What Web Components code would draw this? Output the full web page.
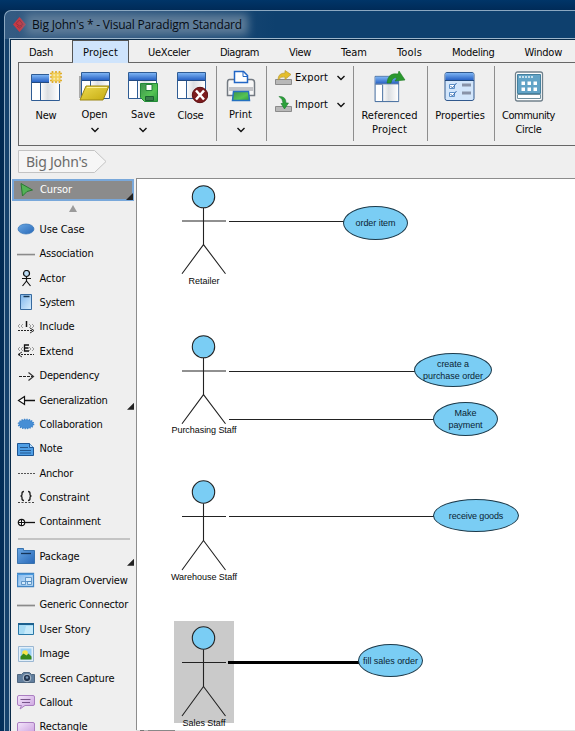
<!DOCTYPE html>
<html lang="en">
<head>
<meta charset="utf-8">
<title>Big John's * - Visual Paradigm Standard</title>
<style>
html,body{margin:0;height:100%;overflow:hidden}
body{font-family:"DejaVu Sans Condensed","DejaVu Sans",sans-serif;font-stretch:condensed;font-size:11px;color:#080808}
</style>
</head>
<body>
<app-window></app-window>
<script>
class FitText extends HTMLElement{
  connectedCallback(){
    const root=this.attachShadow({mode:'open'});
    const w=+this.getAttribute('w');
    root.innerHTML=`<style>:host{display:block;width:${w}px;white-space:nowrap;line-height:14px;flex:none}span{display:inline-block}</style><span><slot></slot></span>`;
    const s=root.querySelector('span'),n=this.textContent.length;
    const r=s.getBoundingClientRect().width;
    if(r)s.style.letterSpacing=((w-r)/n).toFixed(3)+'px';
  }
}

const defs=`<defs>
<linearGradient id="bar" x2="0" y2="1"><stop stop-color="#7db4f4"/><stop offset="1" stop-color="#2862c4"/></linearGradient>
<linearGradient id="pane" x2="1" y2="0"><stop stop-color="#fff"/><stop offset=".4" stop-color="#dcdfe2"/><stop offset="1" stop-color="#fff"/></linearGradient>
<linearGradient id="yel" x2="1" y2="1"><stop stop-color="#eedb50"/><stop offset="1" stop-color="#c5ab10"/></linearGradient>
<linearGradient id="grn" x2="1" y2="1"><stop stop-color="#3e8f4e"/><stop offset=".6" stop-color="#55c453"/><stop offset="1" stop-color="#2f9a3f"/></linearGradient>
<linearGradient id="blu" x2="1" y2="1"><stop stop-color="#69a7e3"/><stop offset="1" stop-color="#2868b8"/></linearGradient>
<linearGradient id="sky" x2="1" y2="1"><stop stop-color="#7fb6ec"/><stop offset="1" stop-color="#d8eefe"/></linearGradient>
<linearGradient id="pur" x2="1" y2="1"><stop stop-color="#f4e6fb"/><stop offset="1" stop-color="#c99ede"/></linearGradient></defs>`;
const win=`<path d="M2.5 4.5h28v26h-28z" fill="#fff" stroke="#2f5c94"/><path d="M3 5h27v7h-27z" fill="url(#bar)"/><path d="M3 12.5h27" stroke="#244b80"/><path d="M11 13h19v17h-19z" fill="url(#pane)"/><path d="M11.5 13v17" stroke="#2f5c94"/>`;
const big={
new:win+`<path d="M20 0h14v14h-14z" fill="#efefef"/><path d="M23.5 1v12M27 1v12M30.500 1v12M21 3.500h12M21 7h12M21 10.500h12" stroke="#e0ae2c" stroke-width="1.700"/><path d="M23 3h8v8h-8z" fill="#ffe87a" opacity=".55"/>`,
open:`<path d="M1 6h3v22H1z" fill="#aaa"/><g transform="translate(1,-2)">${win}</g><path d="M8 16h23l-6 14H2z" fill="url(#yel)" stroke="#9b8613"/><path d="M9 17.500h20" stroke="#fff39a"/>`,
save:`<g transform="translate(0,-2)">${win}</g><path d="M14.500 13.500h17v18h-13l-4-4z" fill="url(#grn)" stroke="#238a38"/><path d="M20 14.500h6v6h-6z" fill="#fff" stroke="#26803a"/><path d="M19.500 26.500h8v4h-8z" fill="#3b7d4c" stroke="#1b6330"/>`,
close:`<g transform="translate(1,-2)">${win}</g><circle cx="26" cy="25" r="7.700" fill="#7d1c1e" stroke="#5d1113"/><path d="M22 20.500l8 9M30 20.500l-8 9" stroke="#fff" stroke-width="2.500"/>`,
print:`<path d="M5.500 9.500h22q3 0 3 3v13h-27v-13q0-3 2-3z" fill="#f7f7f7" stroke="#737a82" stroke-width="1.500"/><path d="M5 17h24v4H5z" fill="#c2c3c7"/><path d="M10.500 1.500h9l4 4v7h-13z" fill="#fff" stroke="#2266c5" stroke-width="1.500"/><path d="M19 1.500v5h5" fill="none" stroke="#2266c5"/><path d="M9.500 21.500h15l1 9h-17z" fill="url(#grn)" stroke="#2471c0" stroke-width="1.500"/>`,
ref:`<g transform="translate(0,2) scale(.84 .97)">${win}</g><path d="M14 13q1-11 11-9l1-3 6 9-10 1 2-3q-5-1-6 5z" fill="#2b982e" stroke="#1f7c23" stroke-width=".6"/>`,
prop:`<rect x="2" y="2.500" width="29" height="28" rx="2" fill="#d3e6fb" stroke="#31598d"/><path d="M2.500 3h28v7h-28z" fill="url(#bar)"/><path d="M2 10.500h29" stroke="#244b80"/><path d="M6.500 14.500h5v4h-5zM6.500 22.500h5v4h-5z" fill="#fff" stroke="#5a8fc8"/><path d="M7.500 16l2 2 4-5M7.500 24l2 2 4-5" fill="none" stroke="#3e6fb0"/><path d="M19 13.500h9v3h-9zM19 21.500h9v3h-9z" fill="#8993a8"/>`,
comm:`<rect x="3.500" y="2" width="27" height="29" rx="2" fill="#fff" stroke="#71818c" stroke-width="1.300"/><path d="M5.500 4.500h23v19h-23z" fill="#62a3c6" stroke="#45819f"/><path d="M7 7h15" stroke="#c4dfec" stroke-width="2.200" stroke-dasharray="2 1"/><path d="M9.500 11.500h3.500v3.500H9.500zM15.500 11.500h3.500v3.500h-3.500zM21.500 11.500h3.500v3.500h-3.500zM9.500 17.500h3.500v3.500H9.500zM15.500 17.500h3.500v3.500h-3.500zM21.500 17.500h3.500v3.500h-3.500z" fill="#fff"/><path d="M5.500 24.500h23v4h-23z" fill="#fff" stroke="#71919f"/>`
};
const small={
cursor:`<path d="M3 1.500L14.500 8 9 9.500 4.500 14z" fill="#53b256" stroke="#2b7933"/>`,
usecase:`<ellipse cx="9" cy="8" rx="8" ry="5" fill="url(#blu)" stroke="#3674b6" stroke-width=".7"/>`,
assoc:`<path d="M0 8.500h18" stroke="#8b8b8b" stroke-width="1.700"/>`,
actor:`<circle cx="9.500" cy="3.500" r="3" fill="#bcdcf4" stroke="#111" stroke-width="1.200"/><path d="M9.500 6.500v5M5 8.500h9M9.500 11l-4 5M9.500 11l4 5" stroke="#111" stroke-width="1.200" fill="none"/>`,
system:`<path d="M3.500.5h11v15h-11z" fill="url(#sky)" stroke="#376a9f"/><path d="M6.500 2.500h6" stroke="#173753" stroke-width="1.500"/>`,
include:`<path d="M3 5L1 7l2 2M6 5L4 7l2 2M12 5l2 2-2 2M15 5l2 2-2 2" fill="none" stroke="#888" stroke-width=".8"/><path d="M9.500 2v6" stroke="#111" stroke-width="1.500"/><path d="M1 11.500h15" stroke="#222" stroke-dasharray="2 1"/><path d="M13 9l4 2.500-4 2.500" fill="none" stroke="#333"/>`,
extend:`<path d="M3 4L1 6l2 2M6 4L4 6l2 2M12 4l2 2-2 2M15 4l2 2-2 2" fill="none" stroke="#888" stroke-width=".8"/><path d="M12 2H7.500v6H12M8 5h3.500" fill="none" stroke="#111" stroke-width="1.300"/><path d="M1 11.500h16" stroke="#222" stroke-dasharray="2 1"/><path d="M5 9l-4 2.500 4 2.500" fill="none" stroke="#333"/>`,
depend:`<path d="M2 8.500h14" stroke="#222" stroke-dasharray="3 1"/><path d="M11.500 4.500l5 4-5 4" fill="none" stroke="#333" stroke-width="1.200"/>`,
general:`<path d="M7 8.500h11" stroke="#111" stroke-width="1.500"/><path d="M7.500 4.500l-6 4 6 4z" fill="#fff" stroke="#111" stroke-width="1.200"/>`,
collab:`<ellipse cx="9" cy="8" rx="7.500" ry="4.500" fill="#468ed5" stroke="#3d83c9" stroke-width="1.700" stroke-dasharray="1.200 1.200"/>`,
note:`<path d="M.5 2.500h12l4 4v8H.5z" fill="#4e9ee5" stroke="#1d5593"/><path d="M12.500 2.500v4h4" fill="#b6dbfa" stroke="#1d5593"/><path d="M3 6.500h8M3 9.500h11M3 12h11" stroke="#23578e"/>`,
anchor:`<path d="M1 8.500h17" stroke="#555" stroke-dasharray="2 1"/>`,
constraint:`<path d="M7 1.500q-2 0-2 2v1q0 1.500-1.500 1.500Q5 6 5 7.500v1q0 2 2 2M11 1.500q2 0 2 2v1q0 1.500 1.500 1.500Q13 6 13 7.500v1q0 2-2 2" fill="none" stroke="#222" stroke-width="1.400"/><path d="M1 12.500h17" stroke="#444" stroke-dasharray="2 1.500"/>`,
contain:`<path d="M8 8.500h10" stroke="#111" stroke-width="1.300"/><circle cx="4.500" cy="8.500" r="3.200" fill="#fff" stroke="#111" stroke-width="1.200"/><path d="M1 8.500h7M4.500 5v7" stroke="#111"/>`,
package:`<path d="M.5.500h6v2h11v13H.5z" fill="url(#blu)" stroke="#3973ae"/><path d="M4 5.500h10" stroke="#143458" stroke-width="1.300"/>`,
overview:`<path d="M.5 1.500h16v13H.5z" fill="url(#sky)" stroke="#4386c4" stroke-width="1.300"/><path d="M4.500 9.500h4v3h-4zM10.500 9.500h4v3h-4zM8.500 5.500h6v4h-6z" fill="#d5ebfc" stroke="#4b86bc" stroke-width=".8"/><path d="M0 2.500h17" stroke="#4a9adf"/>`,
story:`<path d="M1.500 2.500h15v11h-15z" fill="#a8dcf5" stroke="#2877a7"/><path d="M9 5h7v8h-9z" fill="#d4f0fc" opacity=".7"/><path d="M1 3h16" stroke="#1c608e" stroke-width="2"/>`,
image:`<path d="M1.500.5h15v15h-15z" fill="#e2effa" stroke="#9bb7d2"/><path d="M3.500 2.500h11v11h-11z" fill="#9bcff5"/><circle cx="8" cy="7" r="2.800" fill="#f6e64a"/><path d="M3.500 13.500v-3l3-3 3 2 2-2 3 3v3z" fill="#35881c"/>`,
camera:`<path d="M.5 4.500h4l2-2h6l2 2h3v8H.500z" fill="#627f9e" stroke="#4f667f"/><circle cx="10" cy="8" r="3.800" fill="#243650" stroke="#b7c5d4"/><circle cx="10" cy="7.500" r="1.300" fill="#7895b4"/>`,
callout:`<path d="M2 1.500h14q1.500 0 1.500 1.500v7q0 1.500-1.500 1.500H8L3 15l1.500-3.500H2q-1.500 0-1.500-1.500V3q0-1.500 1.500-1.500z" fill="url(#pur)" stroke="#aa7ec1"/><path d="M3.500 5.500h10M5 8.500h8" stroke="#77558a"/>`,
rect:`<rect x=".5" y="3.500" width="17" height="12" rx="1.500" fill="url(#pur)" stroke="#aa7ec1"/>`
};
const exportIcon=`<svg width="18" height="16">${defs}<path d="M.5 9.500h16v5H.500z" fill="#b8b8b8" stroke="#8b8b8b"/><path d="M3 10Q3 3 10 3V.500l6 4-6 5V7Q6 6 3 10z" fill="#e4be2c" stroke="#b79b36" stroke-width=".7"/></svg>`;
const importIcon=`<svg width="18" height="17"><path d="M.5 10.500h16v5H.500z" fill="#b8b8b8" stroke="#8b8b8b"/><path d="M4 .5Q11 0 11 7h2.500L9.500 13 6 7.500h2Q8 3 4 .500z" fill="#2ca13b" stroke="#1d7a2e" stroke-width=".6"/></svg>`;
const chevron=`<svg class="chev" width="8" height="6"><path d="M.5 1l3.500 3.500L7.500 1" fill="none" stroke="#111" stroke-width="1.400"/></svg>`;

class RibbonButton extends HTMLElement{
  connectedCallback(){
    const down=this.hasAttribute('menu');
    this.attachShadow({mode:'open'}).innerHTML=`<style>:host{display:flex;flex-direction:column;align-items:center;height:100%;flex:none;box-sizing:border-box;padding-top:7px}
    svg{flex:none}.labels{margin-top:${down?4:5}px;display:flex;flex-direction:column;align-items:center}.chev{margin-top:5px}</style>
    <svg width="34" height="34">${defs}${big[this.getAttribute('icon')]}</svg><div class="labels"><slot></slot></div>${down?chevron:''}`;
  }
}
class PaletteItem extends HTMLElement{
  connectedCallback(){
    const sel=this.hasAttribute('selected');
    this.attachShadow({mode:'open'}).innerHTML=`<style>:host{display:flex;align-items:center;height:24.4px;box-sizing:border-box;padding-left:6px;position:relative;flex:none;${sel?'background:#8b8b8b;border:2px solid #79a8da;margin:0 0 0 1px;width:122px;color:#fff;height:22px;padding-left:3.5px;':''}}
    svg{flex:none;margin-right:4.500px}.more{position:absolute;right:${sel?-1:2}px;bottom:${sel?-1:3}px;width:7px;height:7px;background:#222;clip-path:polygon(100% 0,100% 100%,0 100%)}</style>
    <svg width="18" height="17">${defs}${small[this.getAttribute('icon')]}</svg><slot></slot>${this.hasAttribute('more')?'<i class="more"></i>':''}`;
  }
}
class UmlActor extends HTMLElement{
  connectedCallback(){
    const sel=this.hasAttribute('selected'),h=this.getAttribute('figure')||96;
    this.attachShadow({mode:'open'}).innerHTML=`<style>:host{position:absolute;left:${this.getAttribute('x')}px;top:${this.getAttribute('y')}px;width:60px;height:102px;${sel?'background:#cacaca;':''}display:flex;flex-direction:column;align-items:center;font:9px "Liberation Sans",Arial,sans-serif}
    svg{flex:none}div{margin-top:-1px;height:14px}</style>
    <svg width="60" height="${h}" viewBox="0 0 60 96" preserveAspectRatio="none" fill="none" stroke="#222" stroke-width="1.100"><circle cx="29.500" cy="17" r="11.200" fill="#7acdf4"/><path d="M29.500 28.500v37.500M8 41.500h44"/><path d="M29.500 65.500L8 95M29.500 65.500L51.500 95"/></svg><div><slot></slot></div>`;
  }
}
class UseCase extends HTMLElement{
  connectedCallback(){
    const g=k=>this.getAttribute(k);
    this.attachShadow({mode:'open'}).innerHTML=`<style>:host{position:absolute;left:${g('x')}px;top:${g('y')}px;width:${g('width')}px;height:${g('height')}px;box-sizing:border-box;border:1px solid #1d3a4a;border-radius:50%;background:#7acdf4;display:flex;flex-direction:column;align-items:center;justify-content:center;font:9px "Liberation Sans",Arial,sans-serif;color:#0b2433}
    ::slotted(fit-text){margin:-1px 0}</style><slot></slot>`;
  }
}
class UmlLink extends HTMLElement{
  connectedCallback(){
    const g=k=>this.getAttribute(k);
    this.attachShadow({mode:'open'}).innerHTML=`<style>:host{position:absolute;left:${g('x')}px;top:${g('y')}px;width:${g('width')}px;height:${g('thick')||1}px;background:${g('thick')?'#000':'#222'}}</style>`;
  }
}
const T=(w,t,c='')=>`<fit-text w="${w}" ${c}>${t}</fit-text>`;
class DiagramCanvas extends HTMLElement{
  constructor(){super();
    const a=(y,w,t,s='')=>`<uml-actor x="37" y="${y}" ${s}>${T(w,t)}</uml-actor>`;
    const u=(x,y,w,h,c)=>`<use-case x="${x}" y="${y}" width="${w}" height="${h}">${c}</use-case>`;
    const l=(x,y,w,s='')=>`<uml-link x="${x}" y="${y}" width="${w}" ${s}></uml-link>`;
    this.attachShadow({mode:'open'}).innerHTML=`<style>:host{display:block;position:relative;background:#fff;border:1px solid #8c8c8c;border-width:1px 0 0 1px;flex:1;overflow:hidden}</style>
    ${l(92,42,115)}${l(92,192,187)}${l(92,240,205)}${l(92,337,205)}
    ${a(1,31,'Retailer','figure="94.7"')}${a(150.5,65,'Purchasing Staff','figure="94.7"')}${a(296,66,'Warehouse Staff')}${a(442,43,'Sales Staff','selected')}
    ${l(91,482,131,'thick="3"')}
    ${u(206,27,65,34,T(40,'order item'))}${u(277,174,78,34,T(32,'create a')+T(60,'purchase order'))}${u(296,223,65,34,T(22,'Make')+T(34,'payment'))}${u(296,320,86,33,T(54.5,'receive goods'))}${u(221,465,65,33,T(55,'fill sales order'))}`;
  }
}
class MenuTabs extends HTMLElement{
  constructor(){super();
    this.attachShadow({mode:'open'}).innerHTML=`<style>:host{display:flex;height:23px;box-sizing:border-box;padding:0 0 0 7px;gap:8px}
    .tab{display:flex;align-items:center;padding:2px 11px 0;border:0 solid #555}.on{background:#cfe4fc;border-width:1px 1px 0;padding:1px 10px 0}</style>
    ${[['Dash',24],['Project',35],['UeXceler',42],['Diagram',39],['View',22],['Team',26],['Tools',25],['Modeling',42.500],['Window',37.500]].map(([t,w],i)=>`<div class="tab ${i==1?'on':''}">${T(w,t)}</div>`).join('')}`;
  }
}
class RibbonBar extends HTMLElement{
  constructor(){super();
    const b=(w,i,c,m='')=>`<ribbon-button style="width:${w}px" icon="${i}" ${m}>${c}</ribbon-button>`;
    this.attachShadow({mode:'open'}).innerHTML=`<style>:host{display:flex;margin-left:7px;height:84px;box-sizing:border-box;border:1px solid #676767;border-right:0;padding-left:3px;position:relative}
    hr{margin:3px 0 4px;border:0;width:1px;background:#8e8e8e;flex:none}
    .io{width:86px;flex:none;box-sizing:border-box;padding:7px 0 0 8px}.row{display:flex;height:15px;margin-bottom:12px;align-items:center}.row fit-text{margin-left:2px}.row .chev{margin-left:auto;margin-right:8px}
    :host::before{content:"";position:absolute;top:-1px;left:54px;width:55px;height:1px;background:#cfe4fc}</style>
    ${b(48,'new',T(21,'New'))}${b(49,'open',T(26,'Open'),'menu')}${b(48,'save',T(24,'Save'),'menu')}${b(47,'close',T(26,'Close'))}<hr style="margin-left:2px">${b(47,'print',T(23,'Print'),'menu')}<hr style="margin-left:2px">
    <div class="io"><div class="row">${exportIcon}${T(33,'Export')}${chevron}</div><div class="row">${importIcon}${T(33,'Import')}${chevron}</div></div><hr>
    ${b(71,'ref',T(56,'Referenced')+T(35,'Project'))}<hr style="margin-left:2px">${b(64,'prop',T(49.500,'Properties'))}<hr style="margin-left:2px">${b(67,'comm',T(53,'Community')+T(26,'Circle'))}`;
  }
}
class BreadCrumb extends HTMLElement{
  constructor(){super();
    this.attachShadow({mode:'open'}).innerHTML=`<style>:host{display:grid;margin:4px 0 5px 7px;width:89px;height:23px;font:14px "Noto Sans","Open Sans",sans-serif;color:#6b6b6b}
    svg,div{grid-area:1/1}div{padding:5px 0 0 8px}</style>
    <svg width="89" height="23"><path d="M.5.500h76l11.500 11-11.500 11H.500z" fill="#f6f6f6" stroke="#c3c3c3"/></svg><div>${T(61.500,"Big John's")}</div>`;
  }
}
class ToolPalette extends HTMLElement{
  constructor(){super();
    const p=([i,t,w,x=''])=>`<palette-item icon="${i}" ${x}>${T(w,t)}</palette-item>`;
    this.attachShadow({mode:'open'}).innerHTML=`<style>:host{display:flex;flex-direction:column;width:125px;flex:none;overflow:hidden;box-sizing:border-box;padding-top:1px}
    .up{width:0;height:0;border:4px solid transparent;border-bottom:7px solid #9a9a9a;border-top:0;margin:4.300px 0 5.300px 58px}hr{margin:3.700px 7px 4px;border:0;height:2px;background:#c4c4c4;width:112px;flex:none}</style>
    ${p(['cursor','Cursor',32,'selected more'])}<div class="up"></div>
    ${[['usecase','Use Case',45],['assoc','Association',54],['actor','Actor',26],['system','System',35],['include','Include',35],['extend','Extend',34],['depend','Dependency',60],['general','Generalization',68,'more'],['collab','Collaboration',63],['note','Note',23],['anchor','Anchor',33.500],['constraint','Constraint',50],['contain','Containment',61]].map(p).join('')}<hr>
    ${[['package','Package',40,'more'],['overview','Diagram Overview',88],['assoc','Generic Connector',88.500],['story','User Story',51],['image','Image',30],['camera','Screen Capture',75],['callout','Callout',33],['rect','Rectangle',48]].map(p).join('')}`;
  }
}
class AppWindow extends HTMLElement{
  constructor(){super();
    this.attachShadow({mode:'open'}).innerHTML=`<style>:host{display:flex;box-sizing:border-box;width:575px;height:731px;padding:10px 0 0 4px;background:linear-gradient(#003568,#002c5a 9px,#002850 12px,#042f5a)}
    .frame{flex:1;min-width:0;display:flex;flex-direction:column;border:1px solid #8ba8c1;border-width:1px 0 0 1px;border-top-left-radius:7px;background:linear-gradient(90deg,#345b82,#2b547e 120px,#0e406e 270px) 0 0/100% 28px no-repeat,#16436e;overflow:hidden}
    .title{height:27px;display:flex;align-items:center;padding-left:8px;flex:none;font:12px "Open Sans","Noto Sans",sans-serif;color:#060c14}
    .title fit-text{margin-left:6px;background:#5f7d99;box-shadow:0 0 9px 6px #5f7d99;height:9px;line-height:9px}
    .body{flex:1;min-height:0;margin-left:4px;border:1px solid #9db6cb;border-width:1px 0 0 1px;box-shadow:inset 1px 1px #092a48;padding:1px 0 0 1px;display:flex;flex-direction:column}
    .client{flex:1;min-height:0;background:#efefef;display:flex;flex-direction:column}
    .work{flex:1;min-height:0;display:flex}
    .main{flex:1;display:flex;flex-direction:column;min-width:0}
    .foot{height:1px;background:linear-gradient(90deg,#ddd 4px,#777 4px 8px,#bbb 8px 12px,#888 12px 39px,#e5e5e5 39px)}</style>
    <div class="frame"><div class="title"><svg width="13" height="15"><path d="M6.500 0L13 7.500 6.500 15 0 7.500z" fill="#c93a44"/><path d="M6.500 3L10 7.500 6.500 9 3 6.500zM4 9l2.500 2L9 9" fill="none" stroke="#9a2f3e"/></svg>${T(210,"Big John's * - Visual Paradigm Standard")}</div>
    <div class="body"><div class="client"><menu-tabs></menu-tabs><ribbon-bar style="margin-top:-1px"></ribbon-bar><bread-crumb></bread-crumb><div class="work"><tool-palette></tool-palette><div class="main"><diagram-canvas></diagram-canvas><div class="foot"></div></div></div></div></div></div>`;
  }
}
for(const [n,c] of [['diagram-canvas',DiagramCanvas],['menu-tabs',MenuTabs],['ribbon-bar',RibbonBar],['bread-crumb',BreadCrumb],['tool-palette',ToolPalette],['app-window',AppWindow],['ribbon-button',RibbonButton],['palette-item',PaletteItem],['uml-actor',UmlActor],['use-case',UseCase],['uml-link',UmlLink],['fit-text',FitText]])customElements.define(n,c);
</script>
</body>
</html>
